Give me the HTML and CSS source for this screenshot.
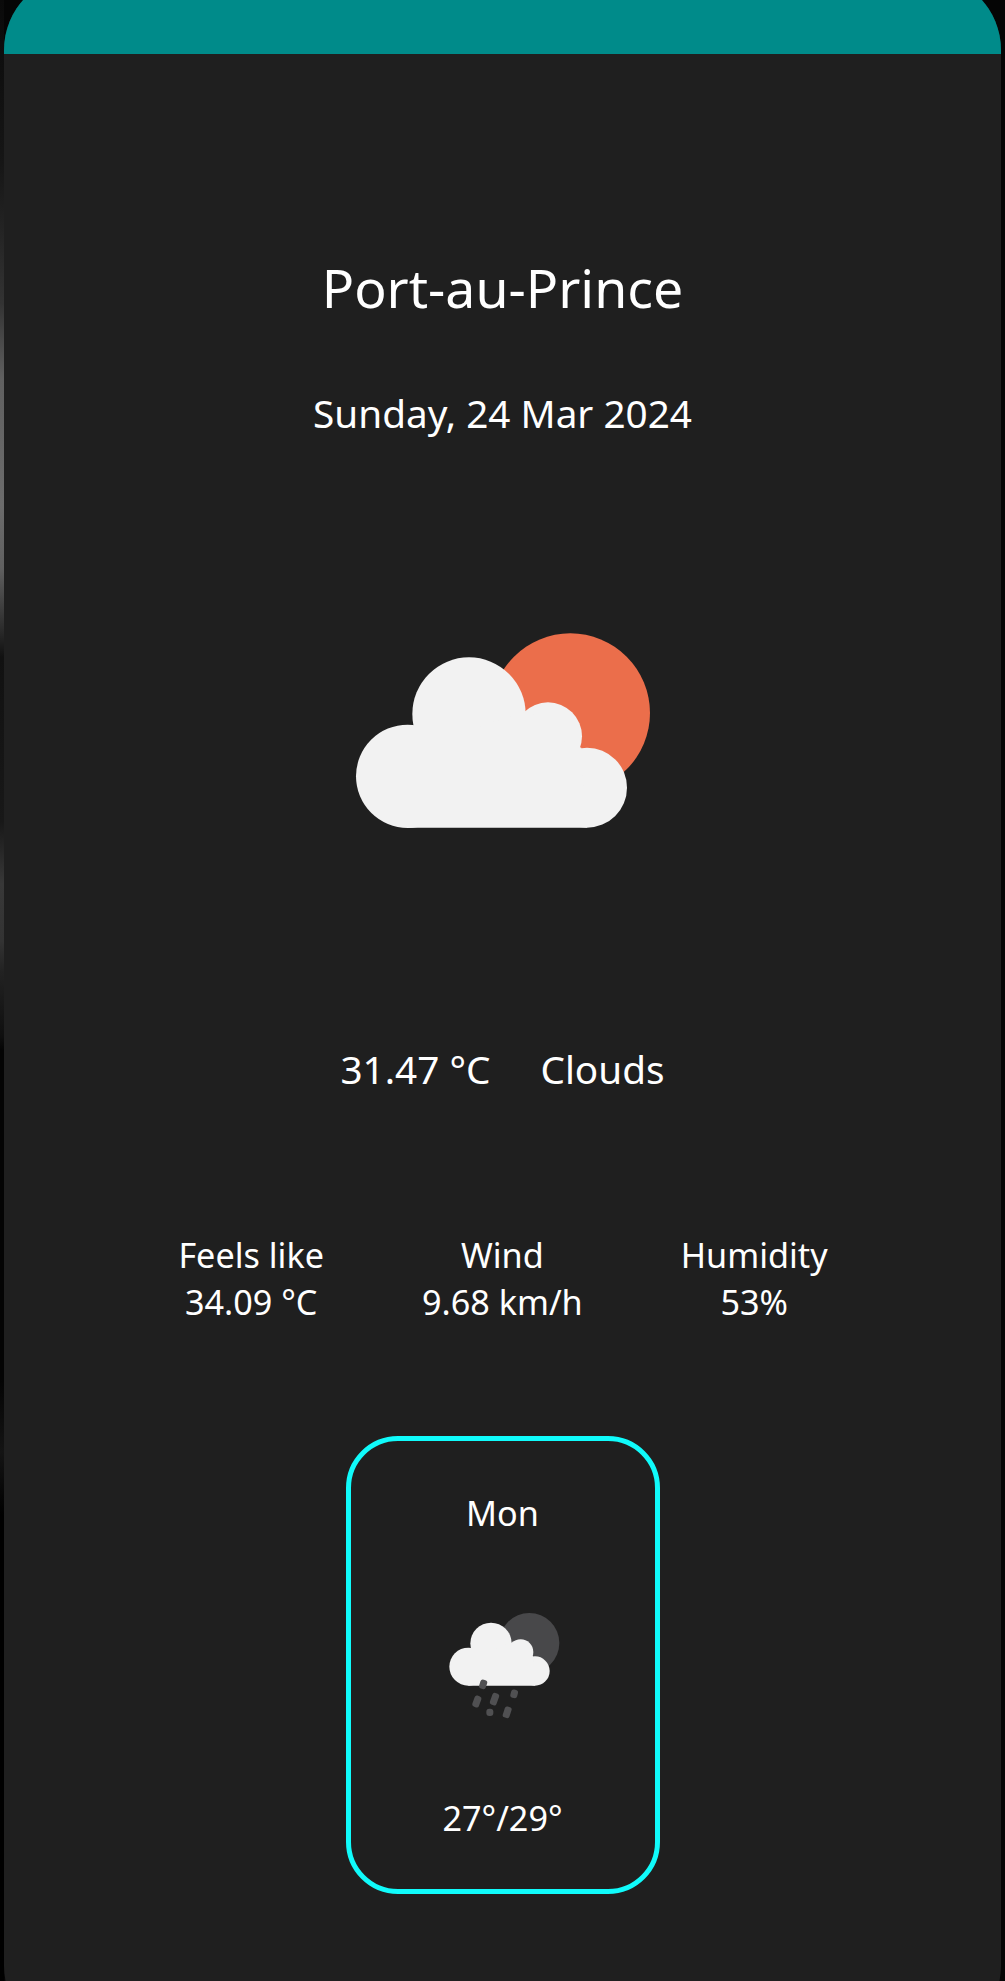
FILE: index.html
```html
<!DOCTYPE html>
<html lang="en">
<head>
<meta charset="utf-8">
<title>Weather</title>
<link rel="stylesheet" href="styles.css">
</head>
<body>
<main class="panel">
  <header class="bar"></header>
  <h1 class="city"><span>Port-au-Prince</span></h1>
  <p class="date"><span>Sunday, 24 Mar 2024</span></p>
  <svg class="icon" viewBox="0 0 990 660" aria-hidden="true">
    <circle cx="691" cy="279" r="239" fill="#eb6e4b"/>
    <g fill="#f2f2f2">
      <circle cx="203" cy="469" r="155"/>
      <circle cx="387" cy="282" r="170"/>
      <circle cx="624" cy="349" r="102"/>
      <circle cx="741" cy="503" r="120"/>
      <path d="M203 330H387L570 270L640 350L724 383V440L741 623H203Z"/>
    </g>
  </svg>
  <div class="now"><span>31.47 °C</span><span>Clouds</span></div>
  <dl class="stats">
    <div><dt>Feels like</dt><dd>34.09 °C</dd></div>
    <div><dt>Wind</dt><dd>9.68 km/h</dd></div>
    <div><dt>Humidity</dt><dd>53%</dd></div>
  </dl>
  <section class="day">
    <h2>Mon</h2>
    <svg class="day-icon" viewBox="0 0 450 390" aria-hidden="true">
      <circle cx="298" cy="129" r="90" fill="#48484a"/>
      <g fill="#f2f2f2">
        <circle cx="115" cy="200" r="57"/>
        <circle cx="183" cy="130" r="62"/>
        <circle cx="272" cy="156" r="38"/>
        <circle cx="315" cy="213" r="44"/>
        <path d="M115 150H183L250 126L285 155L309 169L315 257H115Z"/>
      </g>
      <g fill="#505052">
        <rect x="149" y="239" width="21" height="28" rx="8" transform="rotate(18 159.500 253)"/>
        <rect x="130" y="287" width="21" height="35" rx="7" transform="rotate(20 140.500 304.500)"/>
        <rect x="183" y="279" width="21" height="37" rx="7" transform="rotate(20 193.500 297.500)"/>
        <rect x="242" y="269" width="21" height="25" rx="8" transform="rotate(15 252.500 281.500)"/>
        <rect x="169" y="326" width="21" height="22" rx="9"/>
        <rect x="221" y="320" width="21" height="34" rx="7" transform="rotate(18 231.500 337)"/>
      </g>
    </svg>
    <p>27°/29°</p>
  </section>
</main>
</body>
</html>
```
FILE: styles.css
```css
* { box-sizing: border-box; margin: 0; padding: 0; }
html { background: #050505; }
body {
  height: 1981px;
  overflow: hidden;
  padding: 0 4px;
  color: #fff;
  font-family: "Noto Sans", sans-serif;
  background: linear-gradient(#0a0a0a 0, #161616 164px, #333 303px, #606060 379px, #6c6c6c 505px, #606060 568px, #2a2a2a 631px, #111 657px, #181818 821px, #383838 884px, #333 941px, #222 972px, #0f0f0f 1036px, #040404 1050px, #040404 1380px, #141414 1452px, #000 1515px) left / 4px 100% no-repeat, #050505;
}
.panel {
  display: flex;
  flex-direction: column;
  align-items: center;
  height: 2066px;
  margin-top: -25px;
  border-radius: 75px;
  overflow: hidden;
  background: #1f1f1f;
}
.bar { width: 100%; height: 79px; flex: none; background: #008b8a; }
.city { margin-top: 197px; font-size: 53.6px; line-height: 74px; font-weight: 400; }
.date { margin-top: 61px; font-size: 38.7px; line-height: 54px; }
.icon { width: 330px; height: 220px; margin: 180px 0 202px 5px; flex: none; }
.now { display: flex; gap: 50px; font-size: 38.7px; line-height: 54px; }
.stats {
  display: flex;
  gap: 98px;
  margin: 135px 0 0 1px;
  font-size: 34.2px;
  line-height: 47px;
  text-align: center;
}
.day {
  display: flex;
  flex-direction: column;
  align-items: center;
  width: 314px;
  height: 458px;
  margin-top: 111px;
  padding-top: 48px;
  border: 5px solid #10fbfb;
  border-radius: 52px;
  font-size: 34.2px;
  line-height: 47px;
  flex: none;
}
.day h2 { font-size: inherit; font-weight: 400; }
.day-icon { width: 150px; height: 130px; margin: 64px 0 64px 4px; }
```
